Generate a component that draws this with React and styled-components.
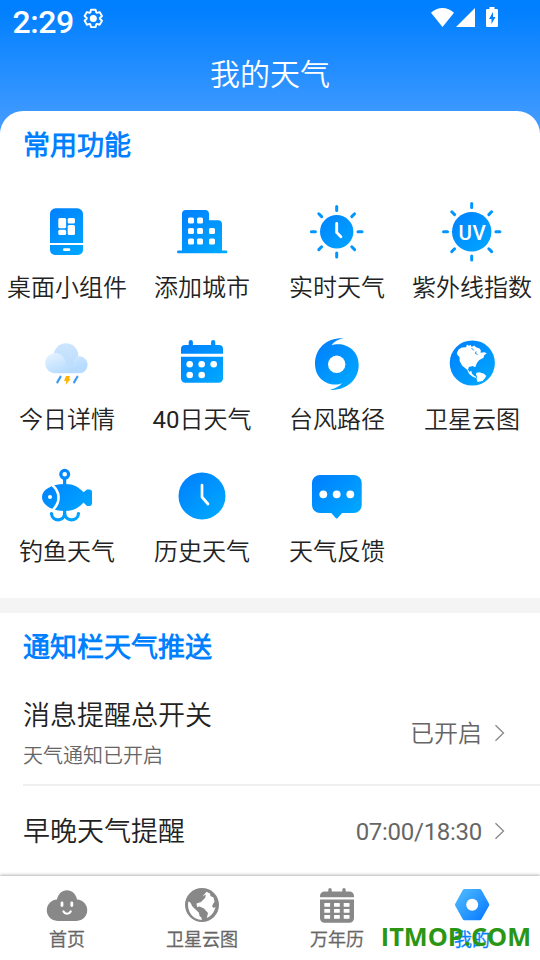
import React, { useState } from 'react'
import styled, { createGlobalStyle } from 'styled-components'

const GlobalStyle = createGlobalStyle`
  * {
    margin: 0;
    padding: 0;
    box-sizing: border-box;
  }

  body {
    background-color: #fff;
    font-family: Roboto, 'Noto Sans CJK SC DemiLight', 'Noto Sans CJK SC', sans-serif;
    overflow: hidden;
  }
`;

const Screen = styled.div`
  position: relative;
  width: 540px;
  height: 960px;
  display: flex;
  flex-direction: column;
  overflow: hidden;
  background: linear-gradient(#007fff 0, #007fff 8px, #409aff 120px, #409aff 140px);
`;

const StatusBar = styled.div`
  height: 40px;
  flex: none;
  display: flex;
  align-items: flex-start;
  padding: 0 42px 0 12px;

  svg {
    display: block;
    flex: none;
  }
`;

const Time = styled.span`
  width: 70px;
  padding-left: 0.5px;
  font-size: 32px;
  line-height: 45px;
  letter-spacing: -0.4px;
  font-weight: 500;
  color: #fff;
`;

const StatusIcons = styled.div`
  display: flex;
  margin-left: auto;
  padding-top: 7px;
`;

const Header = styled.h1`
  flex: none;
  height: 71px;
  line-height: 70px;
  font-size: 30px;
  font-weight: 400;
  text-align: center;
  color: #fff;
`;

const Content = styled.main`
  flex: 1;
  min-height: 0;
  overflow: hidden;
  background-color: #fff;
  border-radius: 23px 23px 0 0;
`;

const SectionTitle = styled.h2`
  padding-left: 23px;
  height: 68px;
  line-height: 70px;
  font-size: 27px;
  font-weight: 700;
  color: #007fff;
`;

const FeatureGrid = styled.div`
  display: grid;
  grid-template-columns: repeat(4, 135px);
  grid-auto-rows: 132px;
  padding-top: 23px;
  height: 419px;
`;

const Feature = styled.button`
  display: flex;
  flex-direction: column;
  align-items: center;
  border: none;
  background: none;
  font-family: inherit;
  font-size: 24px;
  line-height: 36px;
  color: #222;
  white-space: nowrap;
  cursor: pointer;

  svg {
    display: block;
    width: 61px;
    height: 60px;
    margin-bottom: 8px;
  }
`;

const FeatureName = styled.span`
  padding-right: 1px;
`;

const Divider = styled.div`
  height: 15px;
  background-color: #f4f4f4;
`;

const SettingRow = styled.div`
  display: flex;
  align-items: center;
  margin-left: 23px;
  padding-right: 34px;
  height: ${({ $height }) => $height}px;
  border-bottom: 2px solid #efefef;
`;

const SettingText = styled.div`
  flex: 1;
  padding-top: 2px;
`;

const SettingName = styled.p`
  font-size: 27px;
  line-height: 40px;
  color: #222;
`;

const SettingHint = styled.p`
  font-size: 20px;
  line-height: 30px;
  margin-top: 5px;
  color: #666;
`;

const SettingValue = styled.span`
  font-size: 24px;
  line-height: 36px;
  letter-spacing: ${({ $tight }) => ($tight ? '-0.28px' : 'normal')};
  color: #666;
  padding-top: 2px;
  margin-right: 12px;
`;

const TabBar = styled.nav`
  position: relative;
  flex: none;
  display: grid;
  grid-template-columns: repeat(4, 135px);
  height: 84px;
  padding-top: 8px;
  background-color: #fff;
  box-shadow: 0 -1px 3px rgba(0, 0, 0, 0.3);
`;

const Tab = styled.button`
  display: flex;
  flex-direction: column;
  align-items: center;
  border: none;
  background: none;
  font-family: inherit;
  font-size: 18px;
  line-height: 28px;
  color: ${({ $active }) => ($active ? '#007fff' : '#666')};
  -webkit-text-stroke: 0.35px currentColor;
  cursor: pointer;

  svg {
    display: block;
    width: 45px;
    height: 40px;
    margin-bottom: 2px;
  }
`;

const TabName = styled.span`
  padding-right: 1px;
`;

const Watermark = styled.span`
  position: absolute;
  right: 9px;
  bottom: 7px;
  font-family: 'Open Sans', sans-serif;
  font-size: 25.3px;
  line-height: 34px;
  font-weight: 700;
  color: #2a9614;
  pointer-events: none;
`;

/* shared gradient of the blue icons */
const Blue = ({ id }) => (
  <defs>
    <linearGradient id={id} x1="10" y1="8" x2="50" y2="52" gradientUnits="userSpaceOnUse">
      <stop offset="0" stopColor="#007fff" />
      <stop offset="1" stopColor="#00aaff" />
    </linearGradient>
  </defs>
)

const WidgetIcon = () => (
  <svg viewBox="0 0 61 60">
    <Blue id="g-widget" />
    <path fill="url(#g-widget)" d="M13 41V12a5.700 5.700 0 0 1 5.700-5.700h21.600A5.700 5.700 0 0 1 46 12v29zM13 43h33v5a5 5 0 0 1-5 5H18a5 5 0 0 1-5-5z" />
    <g fill="#fff">
      <rect x="21.300" y="16" width="7.800" height="10.300" rx="1.500" />
      <rect x="30.700" y="16" width="7.300" height="5.500" rx="1.500" />
      <rect x="21.300" y="27.700" width="7.800" height="5.300" rx="1.500" />
      <rect x="30.700" y="23" width="7.300" height="10" rx="1.500" />
      <rect x="26" y="46.200" width="7.300" height="2.800" rx="1.200" />
    </g>
  </svg>
)

const CityIcon = () => (
  <svg viewBox="0 0 61 60">
    <Blue id="g-city" />
    <path fill="url(#g-city)" d="M10 48.500V12a4 4 0 0 1 4-4h19a4 4 0 0 1 4 4v6.300h9a4 4 0 0 1 4 4v26.200h4a1.400 1.400 0 0 1 0 2.800H6.400a1.400 1.400 0 0 1 0-2.800z" />
    {[[16, 15.5], [25, 15.5], [16, 26], [25, 26], [37, 26], [16, 36.5], [25, 36.5], [37, 36.5]].map(([x, y]) => (
      <rect key={`${x}-${y}`} x={x} y={y} width="6" height="6" rx="1.5" fill="#fff" />
    ))}
  </svg>
)

const Rays = ({ from, to, stroke }) => (
  <g stroke={stroke} strokeWidth="3" strokeLinecap="round">
    {[0, 45, 90, 135, 180, 225, 270, 315].map((a) => {
      const c = Math.cos(a * Math.PI / 180)
      const s = Math.sin(a * Math.PI / 180)
      return <path key={a} d={`M${29.7 + c * from} ${29.7 + s * from}L${29.7 + c * to} ${29.7 + s * to}`} />
    })}
  </g>
)

const SunClockIcon = () => (
  <svg viewBox="0 0 61 60">
    <Blue id="g-sun" />
    <circle cx="29.700" cy="29.700" r="16.700" fill="url(#g-sun)" />
    <Rays from={21.3} to={25.3} stroke="#0095ff" />
    <path d="M29.700 21.500v9l4.200 4.200" fill="none" stroke="#fff" strokeWidth="2.900" strokeLinecap="round" strokeLinejoin="round" />
  </svg>
)

const UvText = styled.text`
  font-family: Roboto, sans-serif;
  font-size: 20.5px;
  font-weight: 500;
  letter-spacing: 0.6px;
  text-anchor: middle;
  fill: #fff;
`;

const UvIcon = () => (
  <svg viewBox="0 0 61 60">
    <Blue id="g-uv" />
    <circle cx="29.700" cy="29.700" r="19.700" fill="url(#g-uv)" />
    <Rays from={24.2} to={28.2} stroke="#0095ff" />
    <UvText x="30.400" y="37.500">UV</UvText>
  </svg>
)

const RainIcon = () => (
  <svg viewBox="0 0 61 60">
    <defs>
      <linearGradient id="g-cloud" x1="0" y1="9" x2="0" y2="39" gradientUnits="userSpaceOnUse">
        <stop offset="0" stopColor="#cde5fd" />
        <stop offset="1" stopColor="#b5dbff" />
      </linearGradient>
      <linearGradient id="g-cloud2" x1="14" y1="19" x2="22" y2="40" gradientUnits="userSpaceOnUse">
        <stop offset="0" stopColor="#e4f2ff" />
        <stop offset="1" stopColor="#b8dcff" />
      </linearGradient>
    </defs>
    <circle cx="29" cy="21.700" r="12.400" fill="url(#g-cloud)" />
    <path fill="url(#g-cloud2)" d="M39 23.300a9 9 0 0 1 4.300-1 8.600 8.600 0 0 1 0 17H18.300a10.100 10.100 0 1 1 8.200-16c2 2.500 2.300 5.500 2 8h9c-.8-3-.5-5.500 1.500-8z" />
    <path d="M23.500 42.700l-3.200 5.700M40.300 42.700l-3.200 5.700" stroke="#3a9cf5" strokeWidth="2.200" strokeLinecap="round" />
    <path fill="#ffb400" d="M29 42h4l-1 3h1.600L28.500 51l.8-4H27z" />
  </svg>
)

const CalendarIcon = () => (
  <svg viewBox="0 0 61 60">
    <Blue id="g-cal" />
    <path fill="url(#g-cal)" d="M9 19.700V15a4 4 0 0 1 4-4h3.700V8.100a2.100 2.100 0 0 1 4.200 0V11h18.200V8.100a2.100 2.100 0 0 1 4.200 0V11H47a4 4 0 0 1 4 4v4.700zM9 22.700h42v21.800a4.200 4.200 0 0 1-4.200 4.200H13.200A4.200 4.200 0 0 1 9 44.500z" />
    {[[17.7, 30.3], [29.7, 30.3], [41.7, 30.3], [17.7, 41], [29.7, 41]].map(([x, y]) => (
      <circle key={`${x}-${y}`} cx={x} cy={y} r="3.300" fill="#fff" />
    ))}
  </svg>
)

const TyphoonIcon = () => (
  <svg viewBox="0 0 61 60">
    <Blue id="g-ty" />
    <path fill="url(#g-ty)" d="M36.700 4.200C20 3.500 8 14 8 30c0 13 10 20.500 20 20.500 3 0 5-.5 7-1.300-2.500 3.300-7 5.300-12.300 6.600C40 57 51.700 45 51.700 31c0-13-9.700-20.800-20.700-20.800-2.500 0-4.500.3-6.600 1.100C27 7.500 31 5.200 36.700 4.200z" />
    <circle cx="29.700" cy="30.300" r="8.700" fill="#fff" />
  </svg>
)

const GlobeIcon = () => (
  <svg viewBox="0 0 61 60">
    <Blue id="g-globe" />
    <circle cx="30.300" cy="29" r="22.600" fill="url(#g-globe)" />
    <path fill="#fff" d="M14.800 19l1.800-3.600 3.200-2 4.200-.2 1-2.700 1.700 1.300 2-.8 1 2 2.500-1.500 1.800 1.700 3.600 1.300 1.300 2-.4 2.300 3.900-.5 2.400 1-2.600 2-.7 2.500-4.500 2.500-2.200 3-1.600 4-2.600-1.200-3.600.9-1 2.500 1.300 2.200 2.200-.8.3 2.600 2.600 2.500 2 .7-.5 1.300-3.600-1.600-3.300-2.700-1.800-3.900-5-4-2.500-4.600-.2-4.200-2-2z" />
    <path fill="#fff" d="M34.500 38.800l3-.6 4.500 1.500 2.300 2.300-1.600 2.500-2.200 2.500-5 1-1-3.200.7-2.300-1.200-1.800z" />
    <path stroke="#0090ff" strokeWidth="1" fill="none" d="M29.500 14l2.300 2.500M34 17.500l-.5 2 2 1" />
  </svg>
)

const FishIcon = () => (
  <svg viewBox="0 0 61 60">
    <Blue id="g-fish" />
    <g fill="none" stroke="url(#g-fish)" strokeWidth="3.200" strokeLinecap="round">
      <circle cx="27.700" cy="8.300" r="3.900" />
      <path d="M27.600 13.500L27.700 20M27.600 44L27.700 48M14.500 47.500c.5 8.500 13.200 8.500 13.200-.500 0 9 13.200 9 13.800.500" />
    </g>
    <path fill="url(#g-fish)" d="M5 31c0-7 9-13 23-13 9 0 14 3.500 18.500 8.300L50 23.500h2.500c1.500 0 2.500 1 2.500 2.500v11.500c0 1.500-1 2.500-2.500 2.500H50l-3.500-3.500C42 41.500 37 45 28 45 14 45 5 38.500 5 31z" />
    <path d="M15.500 19.200c8 7 8 17 .5 24.600" fill="none" stroke="#fff" strokeWidth="2.600" />
    <circle cx="13" cy="31" r="2" fill="#fff" />
  </svg>
)

const HistoryIcon = () => (
  <svg viewBox="0 0 61 60">
    <Blue id="g-his" />
    <circle cx="30" cy="30" r="23.500" fill="url(#g-his)" />
    <path d="M30 19v12l6 7" fill="none" stroke="#fff" strokeWidth="2.700" strokeLinecap="round" strokeLinejoin="round" />
  </svg>
)

const FeedbackIcon = () => (
  <svg viewBox="0 0 61 60">
    <Blue id="g-fb" />
    <path fill="url(#g-fb)" d="M13 9h33.700a8 8 0 0 1 8 8v22a8 8 0 0 1-8 8H35l-4.500 5.200q-.8.700-1.600 0L24.300 47H13a8 8 0 0 1-8-8V17a8 8 0 0 1 8-8z" />
    <circle cx="16.300" cy="28.300" r="3.900" fill="#fff" />
    <circle cx="29.700" cy="28.300" r="3.900" fill="#fff" />
    <circle cx="43.300" cy="28.300" r="3.900" fill="#fff" />
  </svg>
)

const HomeTabIcon = () => (
  <svg viewBox="0 0 45 40">
    <path fill="#888" d="M13 37A10.700 10.700 0 0 1 12 15.600C13 10 17 6.300 22 6.300S31 10 32 15.600A10.700 10.700 0 0 1 31 37z" />
    <path d="M17 19v2.600M26.800 19v2.600" stroke="#fff" strokeWidth="2.800" strokeLinecap="round" />
    <path d="M18.500 27.500c1.500 3 5.700 3 7.200 0" fill="none" stroke="#fff" strokeWidth="2.200" strokeLinecap="round" />
  </svg>
)

const GlobeTabIcon = () => (
  <svg viewBox="0 0 45 40">
    <circle cx="22" cy="21" r="17" fill="#888" />
    <path fill="#fff" d="M8.300 17.500c2 .2 3 2 3.700 4.500l3 3 3.800 3.500.8 3.500 1.700 1.500.7 2.500C13 36 6.500 27.500 8.300 17.500zM22.500 12.500l4-4.700 3.500 1.700.5 2.500 3 1.500 1 4-2.500 4.500 1.500 2 2-1c-1 5-4.500 9-8.700 11l1.200-5-4-4.500-4.500-2-2.500.5-.5-3.500 4.500-1.500 4-4 1-3.500z" />
  </svg>
)

const CalendarTabIcon = () => (
  <svg viewBox="0 0 45 40">
    <path fill="#888" d="M5 13.300V12a4.500 4.500 0 0 1 4.500-4.500h3.800V5.700a1.700 1.700 0 0 1 3.400 0v1.800h10.600V5.700a1.700 1.700 0 0 1 3.400 0v1.800h3.800A4.500 4.500 0 0 1 39 12v1.300zM5 15.500h34v18.700a4.500 4.500 0 0 1-4.500 4.500h-25A4.500 4.500 0 0 1 5 34.200z" />
    {[19, 25, 31].map((y) => [9.3, 19, 28.7].map((x) => (
      <rect key={`${x}-${y}`} x={x} y={y} width="5.800" height="3.700" rx=".5" fill="#fff" />
    )))}
  </svg>
)

const MineTabIcon = () => (
  <svg viewBox="0 0 45 40">
    <defs>
      <linearGradient id="g-mine" x1="8" y1="8" x2="36" y2="34" gradientUnits="userSpaceOnUse">
        <stop offset="0" stopColor="#4cb8ff" />
        <stop offset="1" stopColor="#0a7cff" />
      </linearGradient>
    </defs>
    <path fill="url(#g-mine)" stroke="url(#g-mine)" strokeWidth="4" strokeLinejoin="round" d="M14.500 7h15.200L37.300 20.700 29.700 34.300H14.500L7 20.700z" />
    <circle cx="22.200" cy="20.700" r="6" fill="#fff" />
  </svg>
)

const GearIcon = () => {
  const points = []
  for (let i = 0; i < 6; i++) {
    [[-27, 6.6], [-15, 9], [15, 9], [27, 6.6]].forEach(([d, r]) => {
      const a = (i * 60 - 90 + d) * Math.PI / 180
      points.push(`${11.3 + r * Math.cos(a)},${18.4 + r * Math.sin(a)}`)
    })
  }
  return (
    <svg width="24" height="32" viewBox="0 0 24 32">
      <polygon points={points.join(' ')} fill="none" stroke="#fff" strokeWidth="1.900" strokeLinejoin="round" />
      <circle cx="11.300" cy="18.400" r="3.500" fill="#fff" />
    </svg>
  )
}

const SignalIcons = () => (
  <svg width="67" height="20" viewBox="431 7 67 20" fill="#fff">
    <path d="M442.500 27L431 12.800C434.300 9.500 438.300 8 442.500 8s8.200 1.500 11.500 4.800z" />
    <path d="M475 8v19h-19z" />
    <path fillRule="evenodd" d="M489.500 9V7h5v2h2.300q1.200 0 1.200 1.200v15.600q0 1.200-1.200 1.200h-9.600q-1.200 0-1.200-1.200V10.200Q486 9 487.200 9zM493 12l-4 7h2.500v5l4-7H493z" />
  </svg>
)

const Chevron = () => (
  <svg width="12" height="18" viewBox="0 0 12 18">
    <path d="M1.500 1.200L9.500 9l-8 7.800" fill="none" stroke="#888" strokeWidth="1.300" />
  </svg>
)

const features = [
  { name: '桌面小组件', Icon: WidgetIcon },
  { name: '添加城市', Icon: CityIcon },
  { name: '实时天气', Icon: SunClockIcon },
  { name: '紫外线指数', Icon: UvIcon },
  { name: '今日详情', Icon: RainIcon },
  { name: '40日天气', Icon: CalendarIcon },
  { name: '台风路径', Icon: TyphoonIcon },
  { name: '卫星云图', Icon: GlobeIcon },
  { name: '钓鱼天气', Icon: FishIcon },
  { name: '历史天气', Icon: HistoryIcon },
  { name: '天气反馈', Icon: FeedbackIcon },
]

const tabs = [
  { name: '首页', Icon: HomeTabIcon },
  { name: '卫星云图', Icon: GlobeTabIcon },
  { name: '万年历', Icon: CalendarTabIcon },
  { name: '我的', Icon: MineTabIcon },
]

export default function App() {
  const [active, setActive] = useState('我的')

  return (
    <>
      <GlobalStyle />
      <Screen>
        <StatusBar>
          <Time>2:29</Time>
          <GearIcon />
          <StatusIcons>
            <SignalIcons />
          </StatusIcons>
        </StatusBar>
        <Header>我的天气</Header>
        <Content>
          <SectionTitle>常用功能</SectionTitle>
          <FeatureGrid>
            {features.map(({ name, Icon }) => (
              <Feature key={name}>
                <Icon />
                <FeatureName>{name}</FeatureName>
              </Feature>
            ))}
          </FeatureGrid>
          <Divider />
          <SectionTitle>通知栏天气推送</SectionTitle>
          <SettingRow $height={105}>
            <SettingText>
              <SettingName>消息提醒总开关</SettingName>
              <SettingHint>天气通知已开启</SettingHint>
            </SettingText>
            <SettingValue>已开启</SettingValue>
            <Chevron />
          </SettingRow>
          <SettingRow $height={92}>
            <SettingText>
              <SettingName>早晚天气提醒</SettingName>
            </SettingText>
            <SettingValue $tight>07:00/18:30</SettingValue>
            <Chevron />
          </SettingRow>
        </Content>
        <TabBar>
          {tabs.map(({ name, Icon }) => (
            <Tab key={name} $active={active === name} onClick={() => setActive(name)}>
              <Icon />
              <TabName>{name}</TabName>
            </Tab>
          ))}
        </TabBar>
        <Watermark>ITMOP.COM</Watermark>
      </Screen>
    </>
  )
}
